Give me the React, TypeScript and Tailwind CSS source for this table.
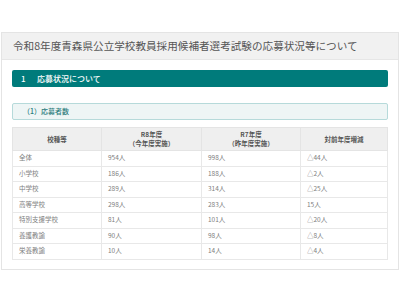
import React from 'react';

const rows = [
  { name: '全体', r8: '954人', r7: '998人', diff: '△44人' },
  { name: '小学校', r8: '186人', r7: '188人', diff: '△2人' },
  { name: '中学校', r8: '289人', r7: '314人', diff: '△25人' },
  { name: '高等学校', r8: '298人', r7: '283人', diff: '15人' },
  { name: '特別支援学校', r8: '81人', r7: '101人', diff: '△20人' },
  { name: '養護教諭', r8: '90人', r7: '98人', diff: '△8人' },
  { name: '栄養教諭', r8: '10人', r7: '14人', diff: '△4人' },
];

const sans = 'font-["Noto_Sans_CJK_JP","Noto_Sans",sans-serif]';

export default function App() {
  return (
    <div className={`w-[400px] h-[300px] bg-white pt-[32px] ${sans}`}>
      <div className="ml-[1px] w-[398px] border border-[#e4e4e4] bg-white">
        <div className="h-[27px] flex items-center px-[11px] bg-[#f1f1f1] border-b border-[#e6e6e6] text-[10.6px] text-[#555] whitespace-nowrap">
          令和8年度青森県公立学校教員採用候補者選考試験の応募状況等について
        </div>
        <div className="px-[10px] pt-[10px] pb-[9px]">
          <div className="h-[17px] flex items-center pl-[9px] bg-[#007b7b] rounded-[2px] text-white text-[8px] font-medium">
            <span className="w-[16px]">1</span>
            <span>応募状況について</span>
          </div>
          <div className="mt-[16px] h-[17px] flex items-center pl-[10px] bg-[#eef5f5] border border-[#b6dada] rounded-[2px] text-[#2c7c7c] text-[7px] font-medium">
            （1）応募者数
          </div>
          <table className="mt-[7px] w-full border-collapse table-fixed text-[6.5px] text-[#808080]">
            <colgroup>
              <col className="w-[89px]" />
              <col className="w-[100px]" />
              <col className="w-[99px]" />
              <col />
            </colgroup>
            <thead>
              <tr className="h-[23px] bg-[#efefef] text-[#555]">
                <th className="border border-[#e4e4e4] text-center font-bold leading-[9px]">校種等</th>
                <th className="border border-[#e4e4e4] text-center font-bold leading-[9px]">
                  R8年度
                  <br />
                  （今年度実施）
                </th>
                <th className="border border-[#e4e4e4] text-center font-bold leading-[9px]">
                  R7年度
                  <br />
                  （昨年度実施）
                </th>
                <th className="border border-[#e4e4e4] text-center font-bold leading-[9px]">対前年度増減</th>
              </tr>
            </thead>
            <tbody>
              {rows.map((r) => (
                <tr key={r.name} className="h-[15.5px]">
                  <td className="border border-[#e8e8e8] pl-[6px]">{r.name}</td>
                  <td className="border border-[#e8e8e8] pl-[6px]">{r.r8}</td>
                  <td className="border border-[#e8e8e8] pl-[6px]">{r.r7}</td>
                  <td className="border border-[#e8e8e8] pl-[6px]">{r.diff}</td>
                </tr>
              ))}
            </tbody>
          </table>
        </div>
      </div>
    </div>
  );
}
